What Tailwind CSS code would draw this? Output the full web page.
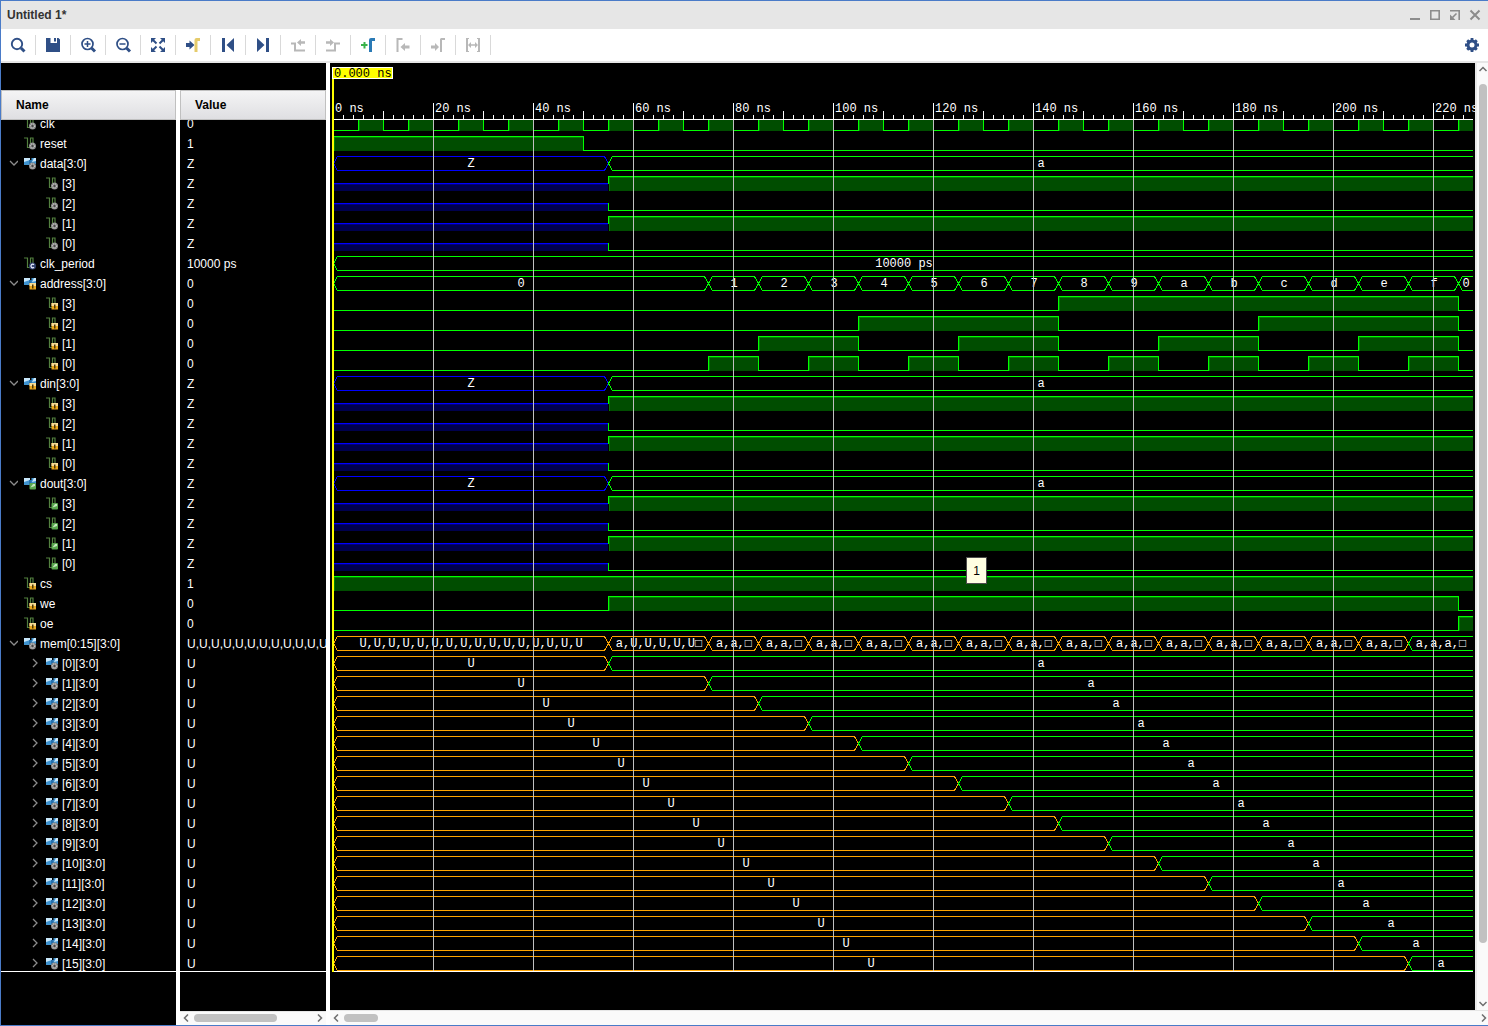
<!DOCTYPE html>
<html lang="en">
<head>
<meta charset="utf-8">
<meta name="viewport" content="width=device-width, initial-scale=1">
<title>Untitled 1*</title>
<script src="https://cdn.jsdelivr.net/npm/@tailwindcss/browser@4"></script>
</head>
<body class="bg-white">
<div class="flex min-h-screen flex-col overflow-hidden border-t border-b border-l border-[#4a7bc8] font-['Liberation_Sans',Arial,sans-serif] text-xs text-black">

  <header class="flex h-7 items-center justify-between bg-[#e6e6e6] pr-[7px] pl-1.5">
    <h1 class="text-xs font-bold text-[#333]">Untitled 1*</h1>
    <div class="flex gap-2 text-[#8c8c8c]">
      <button aria-label="Minimize"><svg class="block size-3" viewBox="0 0 12 12" stroke="currentColor" stroke-width="2" fill="none"><path d="M1 10H11"/></svg></button>
      <button aria-label="Maximize"><svg class="block size-3" viewBox="0 0 12 12" stroke="currentColor" stroke-width="1.600" fill="none"><path d="M1.800 1.800H10.200V10.200H1.800Z"/></svg></button>
      <button aria-label="Float"><svg class="block size-3" viewBox="0 0 12 12" stroke="currentColor" stroke-width="1.600" fill="none"><path d="M1 1.800H10.200V11M7.500 4.500L3.500 8.500"/><path d="M1 5.500V11H6.500Z" fill="currentColor" stroke="none"/></svg></button>
      <button aria-label="Close"><svg class="block size-3" viewBox="0 0 12 12" stroke="currentColor" stroke-width="2" fill="none"><path d="M1.500 1.500L10.500 10.500M10.500 1.500L1.500 10.500"/></svg></button>
    </div>
  </header>

  <div class="flex h-[34px] items-center justify-between border-b-2 border-[#e6e6e6] bg-white pr-1.5" role="toolbar" aria-label="Waveform tools">
    <div class="flex text-[#2f4f86] *:flex *:h-5 *:w-[35px] *:items-center *:justify-center *:border-r *:border-[#d9d9d9]">
      <button aria-label="Search"><svg class="size-5" viewBox="0 0 20 20" fill="none" stroke="currentColor"><circle cx="9" cy="9" r="5.200" stroke-width="1.900"/><path d="M13 13L16.500 16.500" stroke-width="3"/></svg></button>
      <button aria-label="Save"><svg class="size-5" viewBox="0 0 20 20" fill="currentColor"><path d="M3 3H7.500V8H14V3H15.500L17 4.500V17H3Z"/><path d="M11 3H13V6.500H11Z"/></svg></button>
      <button aria-label="Zoom in"><svg class="size-5" viewBox="0 0 20 20" fill="none" stroke="currentColor"><circle cx="9.500" cy="9" r="5.500" stroke-width="1.700"/><path d="M6.500 9H12.500M9.500 6V12" stroke-width="1.500"/><path d="M13.500 13L17 16.500" stroke-width="3"/></svg></button>
      <button aria-label="Zoom out"><svg class="size-5" viewBox="0 0 20 20" fill="none" stroke="currentColor"><circle cx="9.500" cy="9" r="5.500" stroke-width="1.700"/><path d="M6.500 9H12.500" stroke-width="1.500"/><path d="M13.500 13L17 16.500" stroke-width="3"/></svg></button>
      <button aria-label="Zoom fit"><svg class="size-5" viewBox="0 0 20 20" fill="currentColor" stroke="currentColor" stroke-width="2"><path stroke="none" d="M3 3H8L3 8ZM17 3V8L12 3ZM3 17V12L8 17ZM17 17H12L17 12Z"/><path d="M5 5L8.500 8.500M15 5L11.500 8.500M5 15L8.500 11.500M15 15L11.500 11.500"/></svg></button>
      <button aria-label="Go to cursor"><svg class="size-5" viewBox="0 0 20 20" fill="currentColor"><path d="M3 8H6.500V5.500L11.500 10L6.500 14.500V12H3Z"/><path fill="#e5cb6b" d="M11.500 17V5Q11.500 3 13.500 3H17V6H14.500V17Z"/></svg></button>
      <button aria-label="Go to time 0"><svg class="size-5" viewBox="0 0 20 20" fill="currentColor"><path d="M4 3H7V17H4ZM16 3V17L8.500 10Z"/></svg></button>
      <button aria-label="Go to last time"><svg class="size-5" viewBox="0 0 20 20" fill="currentColor"><path d="M13 3H16V17H13ZM4 3V17L11.500 10Z"/></svg></button>
      <button aria-label="Previous transition" class="text-[#b8b8b8]"><svg class="size-5" viewBox="0 0 20 20" fill="currentColor"><path d="M3 7.500H8V14.500H17V16.500H6V9.500H3ZM9 7.500L13 4V6.200H17V8.800H13V11Z"/></svg></button>
      <button aria-label="Next transition" class="text-[#b8b8b8]"><svg class="size-5" viewBox="0 0 20 20" fill="currentColor"><path d="M3 14.500H11V7.500H17V9.500H13V16.500H3ZM11 7.500L7 4V6.200H3V8.800H7V11Z"/></svg></button>
      <button aria-label="Add marker"><svg class="size-5" viewBox="0 0 20 20"><path fill="#39b24a" d="M5.500 7H7.500V9H9.500V11H7.500V13.500H5.500V11H3V9H5.500Z"/><path fill="#2a7ab5" d="M11 17V5Q11 3 13 3H17V6H14V17Z"/></svg></button>
      <button aria-label="Previous marker" class="text-[#b8b8b8]"><svg class="size-5" viewBox="0 0 20 20" fill="currentColor"><path d="M3.500 17V3H9.500V5H5.500V17ZM7.500 12L12 8V10.500H16.500V13.500H12V16Z"/></svg></button>
      <button aria-label="Next marker" class="text-[#b8b8b8]"><svg class="size-5" viewBox="0 0 20 20" fill="currentColor"><path d="M12 17V4L13 3H17V5H14V17ZM11 12L7 8V10.500H3V13.500H7V16Z"/></svg></button>
      <button aria-label="Swap cursors" class="text-[#b8b8b8]"><svg class="size-5" viewBox="0 0 20 20" fill="currentColor"><path d="M3 3H6V4H5V16H6V17H3ZM17 3H14V4H15V16H14V17H17ZM5 10L8 7V9.300H12V7L15 10L12 13V10.700H8V13Z"/></svg></button>
    </div>
    <button aria-label="Settings" class="text-[#2f4f86]"><svg class="block size-5" viewBox="0 0 20 20" fill="none" stroke="currentColor"><circle cx="10" cy="10" r="4" stroke-width="3"/><path stroke-width="2.800" d="M10 3V6M10 14V17M3 10H6M14 10H17M5.200 5.200L7 7M13 13L14.800 14.800M14.800 5.200L13 7M7 13L5.200 14.800"/></svg></button>
  </div>

  <main class="flex flex-1 gap-1">
    <section class="flex w-[325px] shrink-0 flex-col" aria-label="Signals">
      <div class="h-[27px] bg-black"></div>
      <div class="flex flex-1 gap-1">
        <div class="w-[175px] bg-black text-white">
          <div class="flex h-[30px] items-center border border-[#c0c0c0] bg-linear-to-b from-[#f4f4f5] to-[#dfdfe2] pl-3.5 font-bold text-black">Name</div>
          <div class="overflow-hidden border-b border-white">
            <table class="-mt-1.5 -mb-[3px] w-full table-fixed border-collapse" aria-label="Signal names"><tbody id="names"></tbody></table>
          </div>
        </div>
        <div class="flex w-[146px] flex-col bg-black text-white">
          <div class="flex h-[30px] items-center border border-[#c0c0c0] bg-linear-to-b from-[#f4f4f5] to-[#dfdfe2] pl-3.5 font-bold text-black">Value</div>
          <div class="overflow-hidden border-b border-white">
            <table class="-mt-1.5 -mb-[3px] w-full table-fixed border-collapse" aria-label="Signal values"><tbody id="values"></tbody></table>
          </div>
          <div class="mt-auto flex h-3.5 items-center justify-between border-t border-[#e6e6e6] bg-[#fafafa] px-0.5 pb-px text-[#6e6e6e]">
            <svg class="size-2" viewBox="0 0 8 8" fill="none" stroke="currentColor" stroke-width="1.500"><path d="M6 0.500L2.500 4L6 7.500"/></svg>
            <div class="mr-auto ml-1 h-2 w-[83px] rounded-full bg-[#c1c1c1]"></div>
            <svg class="size-2" viewBox="0 0 8 8" fill="none" stroke="currentColor" stroke-width="1.500"><path d="M2 0.500L5.500 4L2 7.500"/></svg>
          </div>
        </div>
      </div>
    </section>

    <section class="flex min-w-0 flex-1 flex-col" aria-label="Waveforms">
      <div class="flex flex-1">
        <div class="relative min-w-0 flex-1 bg-black">
          <svg id="ruler" class="block h-[57px] w-full font-['Liberation_Mono','Courier_New',monospace] text-xs" shape-rendering="crispEdges"></svg>
          <svg id="waves" class="block h-[852px] w-full font-['Liberation_Mono','Courier_New',monospace] text-xs" shape-rendering="crispEdges"></svg>
          <div role="tooltip" class="absolute top-[494px] left-[636px] flex h-[27px] w-[21px] items-center justify-center border border-[#4c4c4c] bg-[#ffffe1] text-xs text-black">1</div>
        </div>
        <div class="flex w-[13px] flex-col items-center border-l-2 border-[#e9e9e9] bg-[#fafafa] py-0.5 text-[#6e6e6e]">
          <svg class="h-2 w-2.5" viewBox="0 0 10 8" fill="none" stroke="currentColor" stroke-width="1.500"><path d="M1.500 6L5 2.500L8.500 6"/></svg>
          <div class="mt-[11px] w-2 flex-1 rounded-full bg-[#c1c1c1]"></div>
          <svg class="mt-[57px] h-2 w-2.5" viewBox="0 0 10 8" fill="none" stroke="currentColor" stroke-width="1.500"><path d="M1.500 2L5 5.500L8.500 2"/></svg>
        </div>
      </div>
      <div class="flex h-[15px] items-center border-t border-[#e6e6e6] bg-[#fafafa] pl-0.5 text-[#6e6e6e]">
        <svg class="size-2" viewBox="0 0 8 8" fill="none" stroke="currentColor" stroke-width="1.500"><path d="M6 0.500L2.500 4L6 7.500"/></svg>
        <div class="mr-auto ml-1 h-2 w-[34px] rounded-full bg-[#c1c1c1]"></div>
        <svg class="size-2" viewBox="0 0 8 8" fill="none" stroke="currentColor" stroke-width="1.500"><path d="M2 0.500L5.500 4L2 7.500"/></svg>
      </div>
    </section>
  </main>
</div>

<script>
// Line colours: driven, high impedance, undefined
const G = '#00ff00', B = '#0000ff', O = '#ffa500';
const PX_PER_NS = 5, X0 = 3, ROW = 20;
const END = Infinity;

// Bit traces: [start ns, state]; bus traces: [start ns, label, colour]
const zTo1 = [[0, 'z'], [55, 1]], zTo0 = [[0, 'z'], [55, 0]];
const zBus = [[0, 'Z', B], [55, 'a', G]];
const clk = []; for (let t = 0; t < 300; t += 10) clk.push([t, 0], [t + 5, 1]);
const addrBus = [[0, '0', G]];
for (let n = 1; n < 16; n++) addrBus.push([65 + 10 * n, n.toString(16), G]);
addrBus.push([225, '0', G]);
const addrBit = b => {
  const s = [[0, 0]];
  for (let n = 1; n < 16; n++) { const v = n >> b & 1; if (v !== s[s.length - 1][1]) s.push([65 + 10 * n, v]); }
  s.push([225, 0]);
  return s;
};
const memBus = [[0, Array(16).fill('U').join(','), O], [55, 'a,U,U,U,U,U□', O]];
for (let t = 75; t < 215; t += 10) memBus.push([t, 'a,a,□', O]);
memBus.push([215, 'a,a,a,□', G]);

// [name, value, level, icon kind, badge, chevron, trace type, trace]
const rows = [
  ['clk', '0', 0, 'sig', 'gear', '', 'bit', clk],
  ['reset', '1', 0, 'sig', 'gear', '', 'bit', [[0, 1], [50, 0]]]
];
const group = (name, value, badge, bus, bits) => {
  rows.push([name + '[3:0]', value, 0, 'bus', badge, 'open', 'bus', bus]);
  bits.forEach((b, i) => rows.push(['[' + (3 - i) + ']', value, 1, 'sig', badge, '', 'bit', b]));
};
const zBits = [zTo1, zTo0, zTo1, zTo0];
group('data', 'Z', 'gear', zBus, zBits);
rows.push(['clk_period', '10000 ps', 0, 'sig', 'const', '', 'bus', [[0, '10000 ps', G]]]);
group('address', '0', 'in', addrBus, [3, 2, 1, 0].map(addrBit));
group('din', 'Z', 'in', zBus, zBits);
group('dout', 'Z', 'out', zBus, zBits);
rows.push(['cs', '1', 0, 'sig', 'in', '', 'bit', [[0, 1]]]);
rows.push(['we', '0', 0, 'sig', 'in', '', 'bit', [[0, 0], [55, 1], [225, 0]]]);
rows.push(['oe', '0', 0, 'sig', 'in', '', 'bit', [[0, 0], [225, 1]]]);
rows.push(['mem[0:15][3:0]', Array(16).fill('U').join(','), 0, 'bus', 'gear', 'open', 'bus', memBus]);
for (let k = 0; k < 16; k++)
  rows.push(['[' + k + '][3:0]', 'U', 1, 'bus', 'gear', 'closed', 'bus', [[0, 'U', O], [k ? 65 + 10 * k : 55, 'a', G]]]);

const badges = {
  gear: '<circle cx="8.500" cy="9" r="3.500" fill="#8a8a8a"/><circle cx="8.500" cy="9" r="2.200" fill="none" stroke="#dcdcdc" stroke-dasharray="1 1"/><circle cx="8.500" cy="9" r="1" fill="#444"/>',
  'in': '<rect x="5.500" y="6" width="6.500" height="6.500" fill="#e9a820"/><rect x="5.500" y="6" width="6.500" height="3" fill="#f9dc94"/><path d="M8 7.500H9.500V11.500H8Z" fill="#4d3600"/>',
  out: '<rect x="5.500" y="6" width="6.500" height="6.500" rx="1" fill="#5aa84f"/><path d="M6.500 10.500L9 7H11V9Z" fill="#c4e8bd"/>',
  'const': '<circle cx="8.500" cy="9" r="3.500" fill="#30406e"/><path d="M10 7.700A1.800 1.800 0 1 0 10 10.300" fill="none" stroke="#e8ecff" stroke-width="1.200"/>'
};
const bases = {
  sig: '<path d="M0 1H3.500V10.500H6.500V1H9V7" fill="none" stroke="#53803f" stroke-width="1.200"/>',
  bus: '<rect x="0" y="1" width="6" height="7" fill="#3f93cf"/><path d="M0 1H6V3L0 5Z" fill="#c8e7fb"/><path d="M5 3H8V8H5Z" fill="#2670ad"/><rect x="7.500" y="1" width="4.500" height="6" fill="#3f93cf"/><path d="M12 1V4L8 5L10 1Z" fill="#c8e7fb"/>'
};
const icon = (kind, badge) => `<svg class="mb-0.5 size-[13px] shrink-0" viewBox="0 0 13 13" aria-hidden="true">${bases[kind]}${badges[badge]}</svg>`;
const chevron = c => c
  ? `<button class="mb-0.5 flex w-4 shrink-0 justify-start text-[#8c8c8c]" aria-label="${c === 'open' ? 'Collapse' : 'Expand'}"><svg class="size-2.5" viewBox="0 0 10 10" fill="none" stroke="currentColor" stroke-width="1.300"><path d="${c === 'open' ? 'M2 3L6 7L10 3' : 'M3 1L7 5L3 9'}"/></svg></button>`
  : '<span class="w-4 shrink-0"></span>';

document.getElementById('names').innerHTML = rows.map(r =>
  `<tr class="h-5"><td class="p-0"><div class="flex h-5 items-center ${r[2] ? 'pl-[29px]' : 'pl-[7px]'}">${chevron(r[5])}${icon(r[3], r[4])}<span class="pl-[3px] whitespace-nowrap">${r[0]}</span></div></td></tr>`).join('');
document.getElementById('values').innerHTML = rows.map(r =>
  `<tr class="h-5"><td class="overflow-hidden p-0 pl-[7px] whitespace-nowrap">${r[1]}</td></tr>`).join('');

const rect = (x, y, w, h, c) => w > 0 ? `<rect x="${x}" y="${y}" width="${w}" height="${h}" fill="${c}"/>` : '';
const xAt = (t, end) => t === END ? end : Math.min(X0 + t * PX_PER_NS, end);

function bit(trace, top, end) {
  let s = '';
  trace.forEach(([t, v], i) => {
    const a = xAt(t, end), b = xAt(i + 1 < trace.length ? trace[i + 1][0] : END, end);
    if (a >= end) return;
    const prev = i ? trace[i - 1][1] : null;
    if (v === 1) {
      s += rect(a + 1, top, b - a - 1, 15, '#004d00') + rect(a + 1, top + 1, b - a - 1, 1, '#008000') + rect(a + 1, top, 1, 15, '#008000') + rect(a, top, b - a, 1, G);
    } else if (v === 0) {
      s += rect(a, top + 14, b - a, 1, G);
    } else {
      s += rect(a + 1, top + 7, b - a - 1, 8, '#00004d') + rect(a + 1, top + 8, b - a - 1, 1, '#000080') + rect(a + 1, top + 7, b - a - 1, 1, B);
    }
    if (prev === 'z') s += rect(a, v ? top : top + 7, 1, 8, G);
    else if (prev !== null) s += rect(a, top, 1, 15, G);
  });
  return s;
}

function bus(trace, top, end) {
  let s = '';
  trace.forEach(([t, label, c], i) => {
    const last = i + 1 === trace.length;
    const a = xAt(t, end) + .5, b = xAt(last ? END : trace[i + 1][0], end) + .5;
    if (a >= end) return;
    const y1 = top + .5, ym = top + 7.5, y2 = top + 14.5, open = b >= end;
    s += open
      ? `<path d="M${end} ${y1}H${a + 4}L${a} ${ym}L${a + 4} ${y2}H${end}" fill="none" stroke="${c}"/>`
      : `<path d="M${a} ${ym}L${a + 4} ${y1}H${b - 4}L${b} ${ym}L${b - 4} ${y2}H${a + 4}Z" fill="none" stroke="${c}"/>`;
    s += `<text x="${Math.round((a + b) / 2)}" y="${top + 11}" fill="#fff" text-anchor="middle">${label}</text>`;
  });
  return s;
}

function draw() {
  const ruler = document.getElementById('ruler'), waves = document.getElementById('waves');
  const end = Math.round(waves.parentElement.clientWidth) - 2;
  let r = '', w = '';
  for (let n = 0, x = X0; x < end; n++, x += 10) {
    const h = n % 10 === 0 ? 16 : n % 5 === 0 ? 8 : 4;
    if (n) r += rect(x, 56 - h, 1, h, '#fff');
    if (n % 10 === 0) r += `<text x="${x + 2}" y="49" fill="#fff">${n * 2} ns</text>`;
  }
  r += rect(4, 56, end - 4, 1, '#fff') + rect(2, 16, 2, 41, '#ff0');
  r += rect(2, 4, 61, 12, '#fff') + rect(3, 5, 59, 10, '#ff0') + '<text x="4" y="14" fill="#000">0.000 ns</text>';
  rows.forEach((row, i) => { w += (row[6] === 'bit' ? bit : bus)(row[7], i * ROW - 4, end); });
  for (let x = X0 + 100; x < end; x += 100) w += rect(x, 0, 1, 851, '#c0c0c0');
  w += rect(4, 851, end - 4, 1, '#fff') + rect(2, 0, 2, 852, '#ff0');
  ruler.innerHTML = r;
  waves.innerHTML = w;
}
draw();
new ResizeObserver(draw).observe(document.getElementById('waves').parentElement);
addEventListener('load', draw);
</script>
</body>
</html>
